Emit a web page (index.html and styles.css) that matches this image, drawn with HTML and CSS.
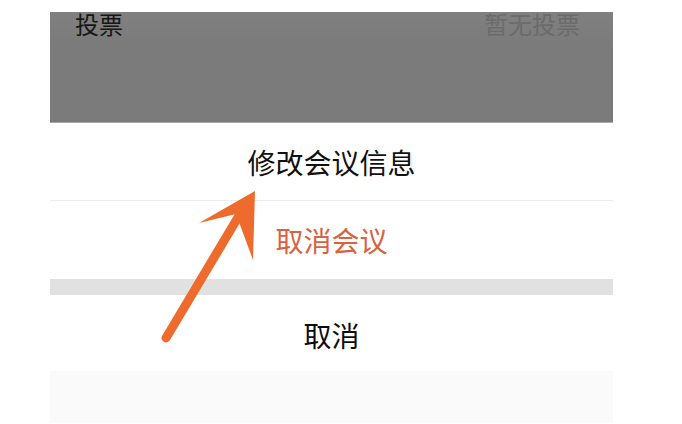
FILE: index.html
```html
<!DOCTYPE html>
<html lang="zh">
<head>
<meta charset="utf-8">
<link rel="stylesheet" href="styles.css">
</head>
<body>
<div class="screen">
  <div class="backdrop">
    <div class="vote-row">
      <span class="vote-label">投票</span>
      <span class="vote-value">暂无投票</span>
    </div>
  </div>
  <div class="sheet">
    <div class="item item-edit">修改会议信息</div>
    <div class="item item-danger">取消会议</div>
    <div class="gap"></div>
    <div class="item item-cancel">取消</div>
    <div class="footer"></div>
  </div>
</div>
<svg class="arrow" width="682" height="424" viewBox="0 0 682 424">
  <line x1="166" y1="338" x2="240" y2="214" stroke="#ef6b2d" stroke-width="9" stroke-linecap="round"/>
  <polygon points="255,191 199,223 236,214 253,260" fill="#ef6b2d"/>
</svg>
</body>
</html>
```

FILE: styles.css
```css
html, body {
  margin: 0;
  padding: 0;
  background: #ffffff;
}
body {
  width: 682px;
  height: 424px;
  overflow: hidden;
  position: relative;
  font-family: "Noto Sans CJK SC", "Noto Sans", sans-serif;
}
.screen {
  margin-left: 50px;
  width: 563px;
  padding-top: 12px;
}
.backdrop {
  height: 110px;
  background: linear-gradient(#808080, #7b7b7b 30%, #7b7b7b);
  border-bottom: 1px solid #a9a9a9;
}
.vote-row {
  height: 24px;
  display: flex;
  justify-content: space-between;
  align-items: center;
  padding: 0 33px 0 25px;
  font-size: 24px;
  line-height: 24px;
}
.vote-label {
  color: #161616;
}
.vote-value {
  color: #6b6b6b;
}
.sheet {
  display: flex;
  flex-direction: column;
}
.item {
  display: flex;
  align-items: center;
  justify-content: center;
  font-size: 28px;
  line-height: 1;
}
.item-edit {
  height: 77px;
  color: #111111;
  border-bottom: 1px solid #ececec;
}
.item-danger {
  height: 78px;
  color: #d9623f;
}
.gap {
  height: 16px;
  background: #e1e1e1;
}
.item-cancel {
  height: 76px;
  color: #0d0d0d;
  padding-top: 3px;
  box-sizing: border-box;
}
.footer {
  height: 52px;
  background: #fafafa;
}
.arrow {
  position: absolute;
  left: 0;
  top: 0;
}
```
